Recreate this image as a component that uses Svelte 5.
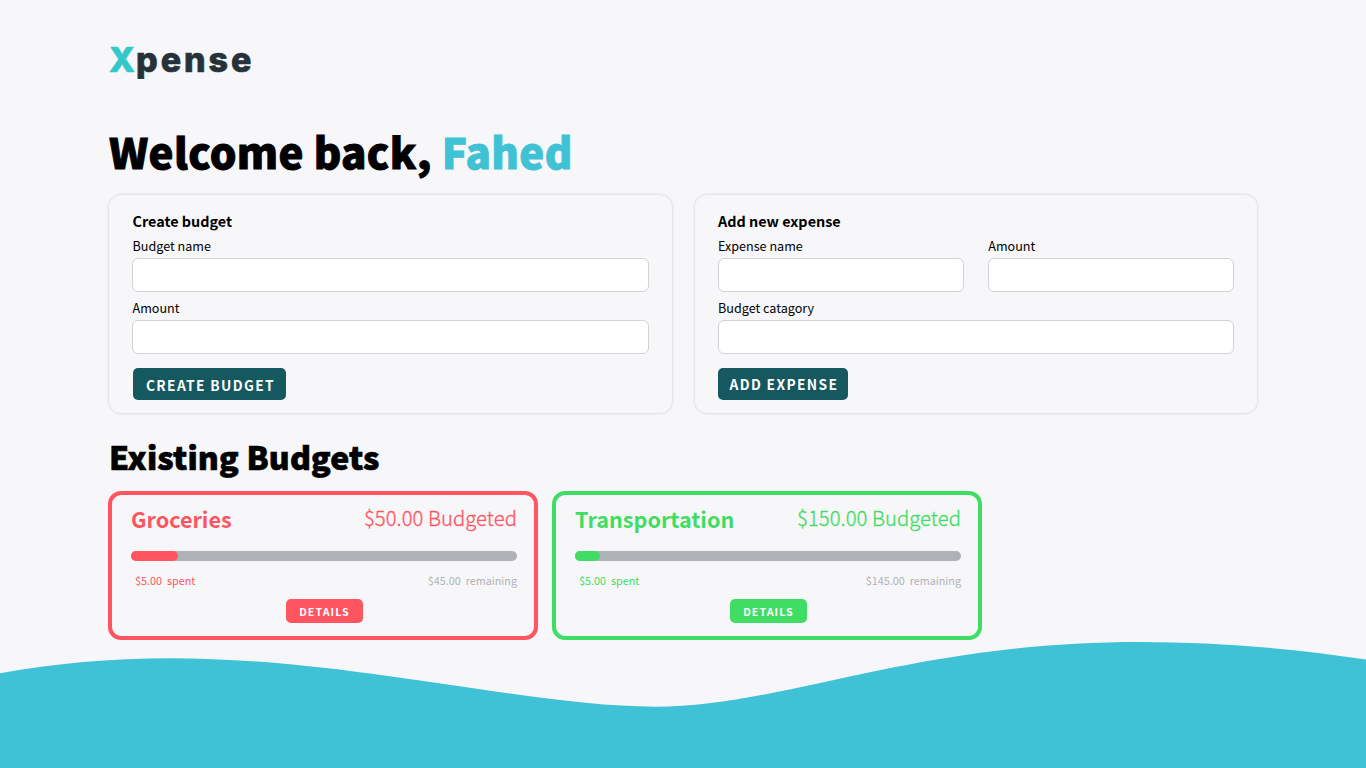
<script>
  const budgets = [
    { name: 'Groceries', budgeted: '$50.00', spent: '$5.00', remaining: '$45.00', fill: 12.2, tone: 'red' },
    { name: 'Transportation', budgeted: '$150.00', spent: '$5.00', remaining: '$145.00', fill: 6.5, tone: 'green' }
  ];
</script>

<div class="page">
  <main>
    <header class="logo"><span>X</span>pense</header>
    <h1>Welcome back, <span>Fahed</span></h1>

    <div class="forms">
      <form>
        <h3>Create budget</h3>
        <label>Budget name<input type="text" /></label>
        <label>Amount<input type="text" /></label>
        <button type="button" class="submit create">CREATE BUDGET</button>
      </form>
      <form>
        <h3>Add new expense</h3>
        <div class="pair">
          <label>Expense name<input type="text" /></label>
          <label>Amount<input type="text" /></label>
        </div>
        <label>Budget catagory<input type="text" /></label>
        <button type="button" class="submit add">ADD EXPENSE</button>
      </form>
    </div>

    <h2>Existing Budgets</h2>
    <div class="budgets">
      {#each budgets as b}
        <section class="budget {b.tone}">
          <div class="top"><strong>{b.name}</strong><span>{b.budgeted} Budgeted</span></div>
          <div class="bar"><div class="fill" style="width: {b.fill}%"></div></div>
          <div class="stats">
            <span>{b.spent}<i></i>spent</span>
            <span class="rest">{b.remaining}<i></i>remaining</span>
          </div>
          <button type="button" class="details">DETAILS</button>
        </section>
      {/each}
    </div>
  </main>
  <svg class="wave" viewBox="0 0 1366 128" preserveAspectRatio="none">
    <path d="M0 33.2C55 23.4 110 18.2 170 18.2C350 18.2 530 66.7 655 66.7C785 66.7 910 2 1140 2C1215 2 1290 8 1366 19.6V128H0Z" />
  </svg>
</div>

<style>
  :global(body) { background: #f7f7fa; overflow: hidden; }
  .page {
    position: relative;
    box-sizing: border-box;
    height: 768px;
    padding: 40px 109px 0 108px;
    overflow: hidden;
    font-family: "Noto Sans CJK SC", sans-serif;
    color: #000;
  }
  h1, h2, h3 { margin: 0; white-space: nowrap; }
  button { border: 0; padding: 0; font-family: inherit; color: #fff; display: block; white-space: nowrap; }
  .logo {
    height: 40px;
    line-height: 40px;
    padding-left: 1px;
    font-family: Inter, sans-serif;
    font-weight: 800;
    font-size: 34px;
    letter-spacing: 2.9px;
    color: #263238;
    -webkit-text-stroke: 0.7px currentColor;
  }
  .logo span { color: #33c9c9; letter-spacing: 1.2px; }
  h1 { margin: 41px 0 0 1px; height: 60px; line-height: 60px; font-size: 42px; font-weight: 900; letter-spacing: 0.31px; -webkit-text-stroke: 0.9px currentColor; }
  h1 span { color: #3fc2d4; }
  .forms { display: grid; grid-template-columns: 1fr 1fr; gap: 23px; margin: 14px 0 0 1px; }
  form {
    box-sizing: border-box;
    height: 218px;
    padding: 15px 23px 0 23px;
    border-radius: 12px;
    box-shadow: 0 0 3px rgba(0, 0, 0, 0.2);
  }
  h3 { margin-left: 0.5px; height: 23px; line-height: 22px; font-size: 14.38px; font-weight: 700; }
  label { display: block; height: 62px; line-height: 26px; font-size: 12.6px; text-indent: 0.5px; }
  input {
    display: block;
    box-sizing: border-box;
    width: 100%;
    height: 34px;
    margin: -1px 0 0;
    border: 1px solid #d3d3d6;
    border-radius: 6px;
    background: #fff;
  }
  .pair { display: grid; grid-template-columns: 1fr 1fr; gap: 24px; }
  .submit {
    height: 32px;
    margin: 11px 0 0 1px;
    border-radius: 5px;
    background: #15585f;
    font-size: 13.8px;
    font-weight: 700;
    letter-spacing: 1.35px;
    text-indent: 2px;
    line-height: 34px;
  }
  .create { width: 153px; }
  .add { width: 130px; line-height: 33px; margin-left: 0.4px; }
  h2 { margin: 21px 0 0 1px; height: 44px; line-height: 44px; font-size: 32px; font-weight: 900; letter-spacing: 0.15px; -webkit-text-stroke: 0.7px currentColor; }
  .budgets { display: flex; gap: 14px; margin-top: 13px; }
  .budget {
    --tone: #ff5560;
    box-sizing: border-box;
    width: 430px;
    height: 149px;
    padding: 10px 17px 0 19px;
    border: 4px solid var(--tone);
    border-radius: 13px;
    color: var(--tone);
  }
  .green { --tone: #3fdd63; }
  .top { display: flex; justify-content: space-between; height: 32px; }
  .top strong { font-size: 21.6px; font-weight: 700; line-height: 28px; }
  .top span { font-weight: 300; font-size: 20.2px; line-height: 26px; letter-spacing: 0.08px; -webkit-text-stroke: 0.3px currentColor; }
  .bar { margin-top: 14px; height: 10px; border-radius: 5px; background: #aeb1b5; }
  .fill { height: 100%; border-radius: 5px; background: var(--tone); }
  .stats {
    display: flex;
    justify-content: space-between;
    margin-top: 11px;
    padding-left: 4px;
    height: 17px;
    line-height: 16px;
    font-size: 10.8px;
    font-weight: 400;
  }
  .stats i { display: inline-block; width: 5px; }
  .rest { color: #b0b2b6; }
  .details {
    width: 77px;
    height: 24px;
    margin: 10px auto 0;
    border-radius: 5px;
    background: var(--tone);
    font-size: 10.7px;
    line-height: 23px;
    font-weight: 700;
    letter-spacing: 1.05px;
    text-indent: 1px;
  }
  .wave { position: absolute; left: 0; bottom: 0; width: 100%; height: 128px; display: block; }
  .wave path { fill: #3fc2d6; }
</style>
